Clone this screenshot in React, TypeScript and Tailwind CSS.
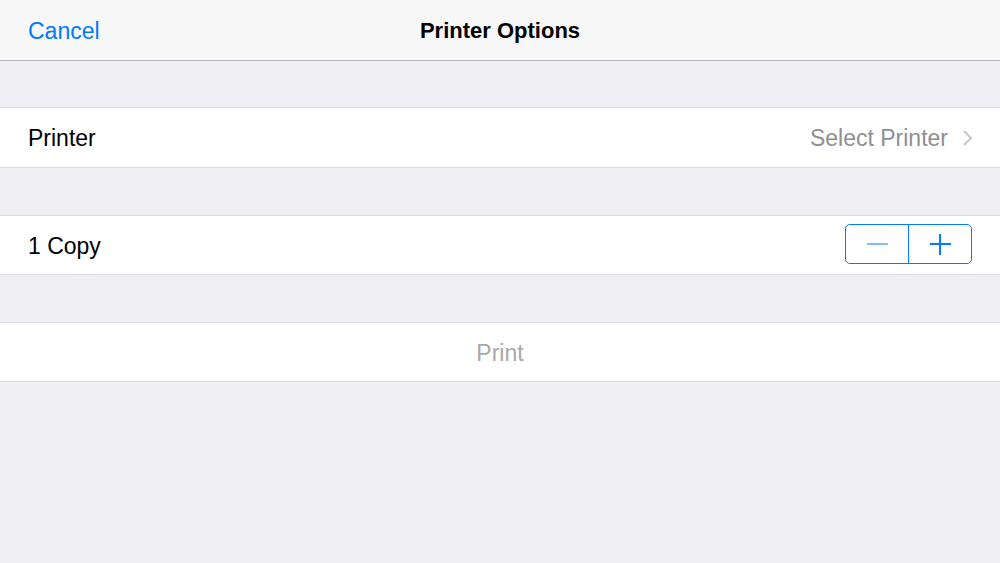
import React from "react";

export default function App() {
  const font = { fontFamily: '"Liberation Sans", Arial, sans-serif' };
  return (
    <div className="w-[1000px] h-[563px] bg-[#efeff4] flex flex-col overflow-hidden" style={font}>
      <div className="h-[61px] bg-[#f7f7f7] border-b border-[#b8b8bc] flex items-center relative shrink-0">
        <span className="pl-[28px] mt-[2px] text-[23px] text-[#007aff]">Cancel</span>
        <span className="absolute left-0 right-0 mt-[1px] text-center text-[22px] font-bold text-black pointer-events-none">Printer Options</span>
      </div>
      <div className="h-[46px] shrink-0" />
      <div className="h-[61px] bg-white border-y border-[#d9d9de] flex items-center pl-[28px] pr-[27px] shrink-0">
        <span className="mt-[2px] text-[23px] text-black">Printer</span>
        <span className="ml-auto mt-[2px] text-[23px] text-[#8e8e93]">Select Printer</span>
        <svg className="ml-[14px]" width="11" height="18" viewBox="0 0 11 18">
          <path d="M2 2 L9 9 L2 16" fill="none" stroke="#c7c7cc" strokeWidth="2" />
        </svg>
      </div>
      <div className="h-[47px] shrink-0" />
      <div className="h-[60px] bg-white border-y border-[#d9d9de] flex items-center pl-[28px] pr-[28px] shrink-0">
        <span className="mt-[2px] text-[23px] text-black">1 Copy</span>
        <div className="ml-auto mb-[2px] w-[127px] h-[40px] border border-[#007aff] rounded-[5px] flex">
          <div className="flex-1 flex items-center justify-center border-r border-[#007aff]">
            <div className="w-[21px] h-[2px] bg-[#80bdff]" />
          </div>
          <div className="flex-1 flex items-center justify-center relative">
            <div className="w-[21px] h-[2px] bg-[#007aff]" />
            <div className="absolute w-[2px] h-[21px] bg-[#007aff]" />
          </div>
        </div>
      </div>
      <div className="h-[47px] shrink-0" />
      <div className="h-[60px] bg-white border-y border-[#d9d9de] flex items-center justify-center shrink-0">
        <span className="mt-[2px] text-[23px] text-[#a8a8a8]">Print</span>
      </div>
    </div>
  );
}
